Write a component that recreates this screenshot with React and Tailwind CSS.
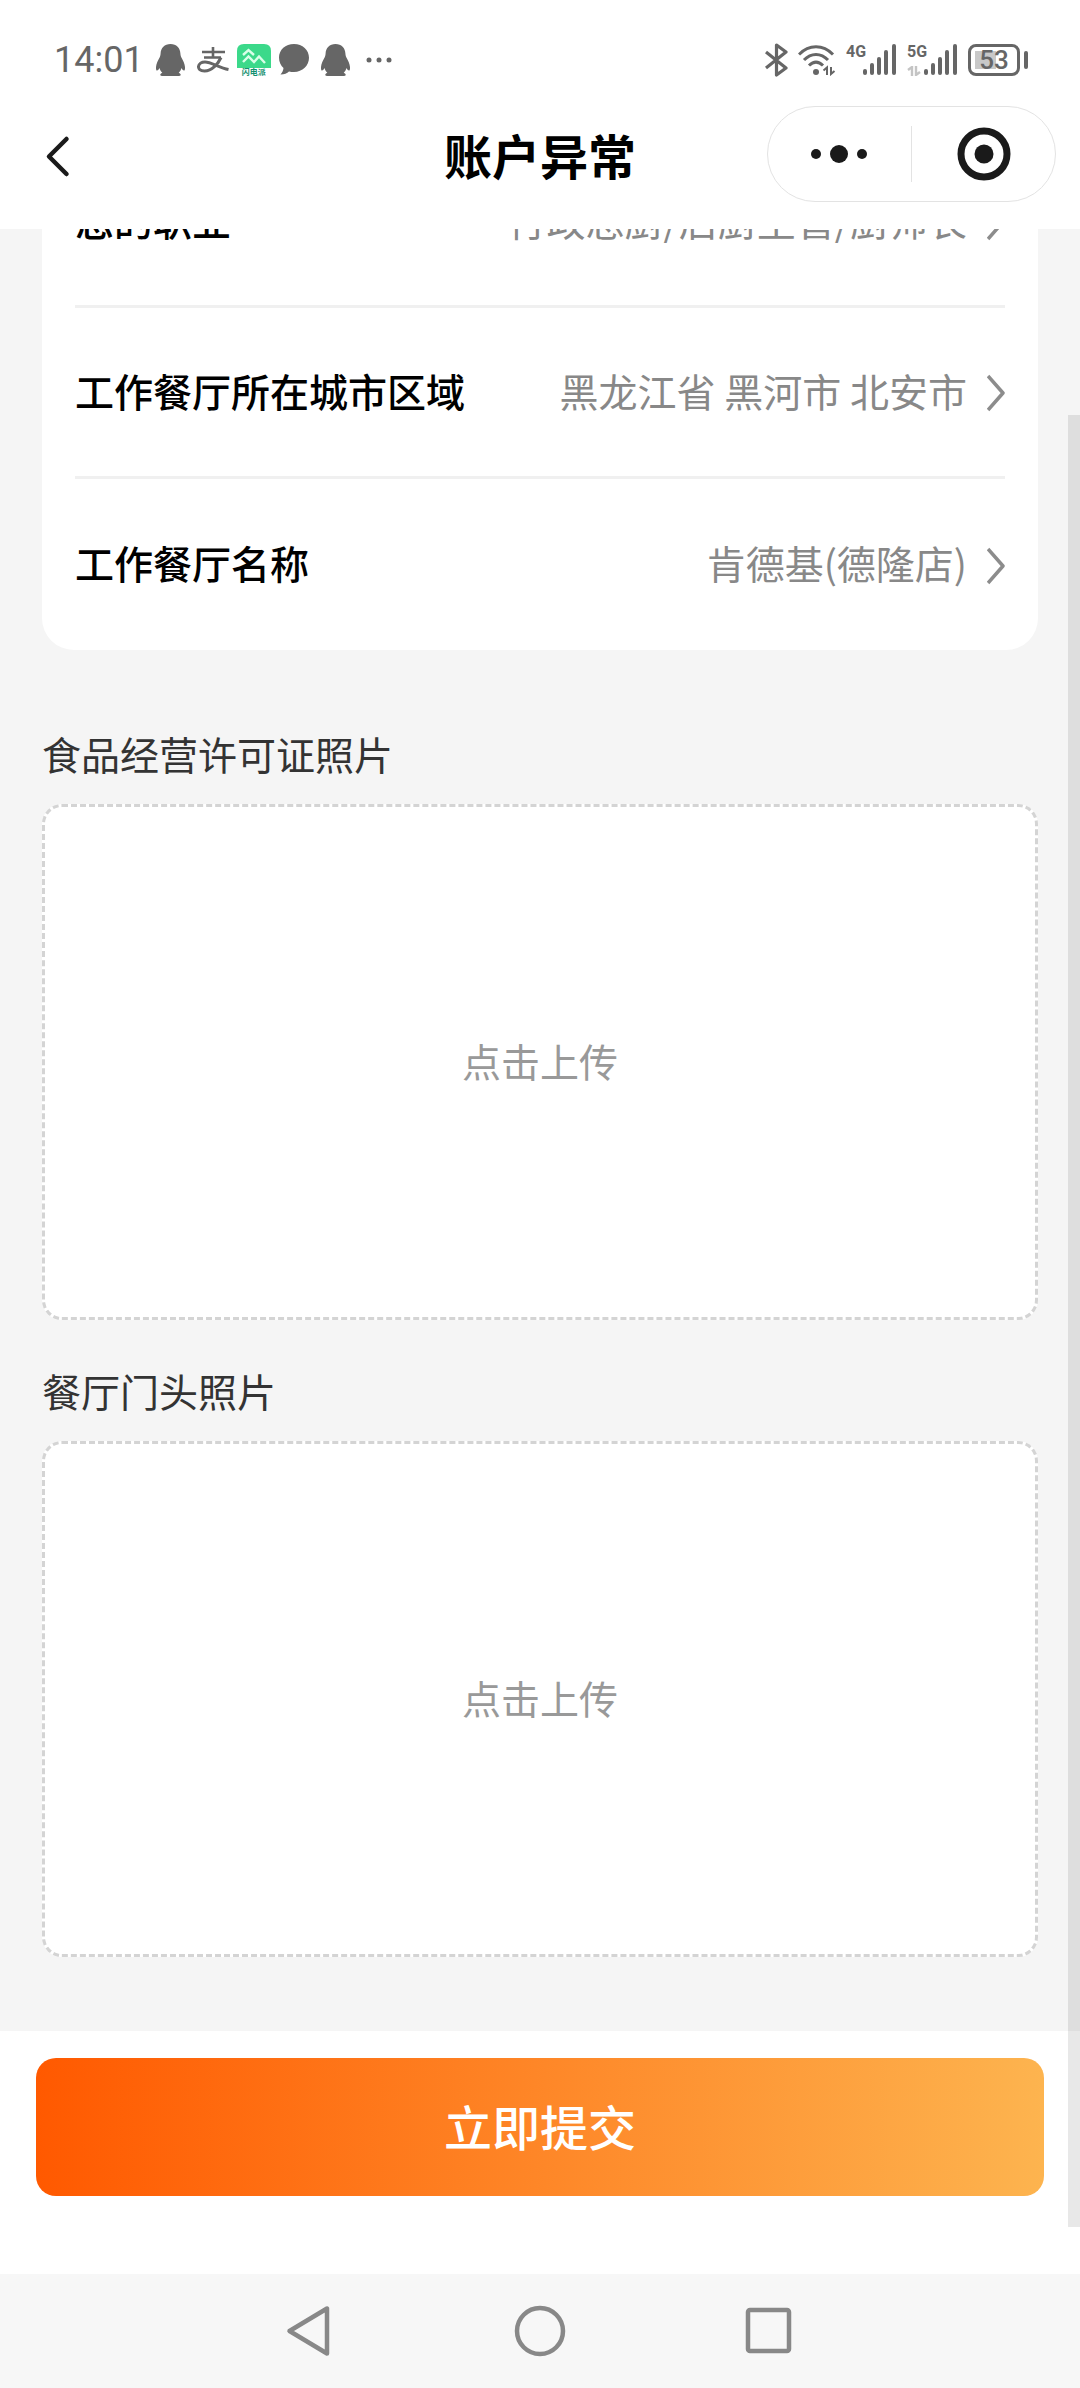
import React, { useState } from "react";

const PROFILE_ROWS = [
  { label: "您的职业", value: "行政总厨/后厨主管/厨师长" },
  { label: "工作餐厅所在城市区域", value: "黑龙江省 黑河市 北安市" },
  { label: "工作餐厅名称", value: "肯德基(德隆店)" },
];

const UPLOADS = [
  { id: "license", title: "食品经营许可证照片" },
  { id: "storefront", title: "餐厅门头照片" },
];

const PenguinIcon = () => (
  <svg width="29" height="32" viewBox="0 0 29 32" fill="#666">
    <path d="M14.500 0C8.500 0 4.800 4 4.600 9.500C4.500 11 4.300 12 3.600 13.500C2 16.500 .3 19.500 0 23C-.1 25 .2 26.600 1 26.500C2 26.400 2.800 25.200 3.600 24C4 26 5 27.600 6.300 28.700C4.800 29.200 4.200 30 4.300 31C4.400 31.800 5.500 32 7 32H22C23.500 32 24.600 31.800 24.700 31C24.800 30 24.200 29.200 22.700 28.700C24 27.600 25 26 25.400 24C26.200 25.200 27 26.400 28 26.500C28.800 26.600 29.100 25 29 23C28.700 19.500 27 16.500 25.400 13.500C24.700 12 24.500 11 24.400 9.500C24.200 4 20.500 0 14.500 0Z" />
  </svg>
);

const AlipayIcon = () => (
  <svg width="32" height="26" viewBox="0 0 32 26" fill="none" stroke="#666" strokeWidth="2.600">
    <path d="M5 5H28M16 0V10M7 10.500H24" />
    <path d="M24 10.500C21 17 15 24 7.500 24C3 24 1.300 21.800 1.500 19.500C1.800 16.800 4.500 15 8 15C14 15 22 20.500 31.500 22.500" strokeWidth="3" />
  </svg>
);

const AppBadge = () => (
  <span className="flex h-8 w-[34px] flex-col items-center rounded-lg bg-white">
    <svg className="shrink-0" width="34" height="24" viewBox="0 0 34 24">
      <path d="M7 0H27Q34 0 34 7V24H0V7Q0 0 7 0Z" fill="#3bd98a" />
      <path d="M6 11L11.500 6L17 11M6 18L11.500 12.500L17 18L22 12.500L28 19" fill="none" stroke="#d9ffe9" strokeWidth="2.400" />
    </svg>
    <span className="text-[8px] font-bold leading-[8px] text-[#13906f]">闪电派</span>
  </span>
);

const BubbleIcon = () => (
  <svg width="30" height="31" viewBox="0 0 30 31" fill="#666">
    <path d="M15 0C6.500 0 0 5.800 0 13.500C0 18 1.800 21.500 4.500 24C4.300 26.500 3.200 28.500 1.500 30.500C5 30.600 8 29.400 10 27.500C11.600 27.900 13.300 28 15 28C23.500 28 30 21.500 30 13.800C30 5.800 23.500 0 15 0Z" />
  </svg>
);

const BluetoothIcon = () => (
  <svg width="23" height="34" viewBox="0 0 23 34" fill="none" stroke="#666" strokeWidth="3.200" strokeLinejoin="round">
    <path d="M1 9L21 25L11.500 32V2L21 9L1 25" />
  </svg>
);

const WifiIcon = () => (
  <svg width="38" height="32" viewBox="0 0 38 32" fill="none" stroke="#666" strokeWidth="3">
    <path d="M1 10.500C11 .2 25 .2 35 10.500M6 16C13 8.500 23 8.500 30 16M11 21.500C15.500 17 20.500 17 25 21.500" />
    <circle cx="18" cy="28" r="3" fill="#666" stroke="none" />
    <path d="M25.500 26.500L29 23.500V31M36.500 27L33 30V23" strokeWidth="2" />
  </svg>
);

const SignalBars = () => (
  <svg width="34" height="32" viewBox="0 0 34 32" fill="#666">
    <rect x="0" y="25" width="4" height="6" rx="2" />
    <rect x="7" y="19" width="4" height="12" rx="2" />
    <rect x="14" y="13" width="4" height="18" rx="2" />
    <rect x="21" y="6" width="4" height="25" rx="2" />
    <rect x="29" y="0" width="4" height="31" rx="2" />
  </svg>
);

const DataArrows = () => (
  <svg width="14" height="10" viewBox="0 0 14 10" fill="none" stroke="#c4c4c4" strokeWidth="2.400">
    <path d="M1 4L5 1V10M13 6L9 9V0" />
  </svg>
);

const Signal = ({ network, faded }) => (
  <span className="flex h-8">
    <span className="flex w-[17px] flex-col gap-1.5 font-[Roboto,sans-serif] text-base font-bold leading-4">
      {network}
      {faded && <DataArrows />}
    </span>
    <SignalBars />
  </span>
);

const Battery = ({ level }) => (
  <span className="flex items-center gap-1">
    <span className="flex h-8 w-[52px] rounded-lg border-3 border-[#666] p-1">
      <span className="flex flex-1 items-center justify-center bg-linear-to-r from-[#c8c8c8] from-55% to-white to-55% font-[Roboto,sans-serif] text-[26px] font-medium leading-6">
        {level}
      </span>
    </span>
    <span className="h-[18px] w-1 rounded-xs bg-[#666]" />
  </span>
);

const StatusBar = () => (
  <div className="flex h-[79px] items-center justify-between pl-[54px] pr-[52px] pt-10 text-[#666]">
    <div className="flex items-center gap-3">
      <span className="font-[Roboto,sans-serif] text-4xl leading-9">14:01</span>
      <PenguinIcon />
      <div className="flex items-center gap-2">
        <AlipayIcon />
        <AppBadge />
        <BubbleIcon />
      </div>
      <PenguinIcon />
      <svg className="ml-1" width="26" height="6" viewBox="0 0 26 6" fill="#666">
        <circle cx="3" cy="3" r="2.500" />
        <circle cx="13" cy="3" r="2.500" />
        <circle cx="23" cy="3" r="2.500" />
      </svg>
    </div>
    <div className="flex items-center gap-2.5">
      <BluetoothIcon />
      <WifiIcon />
      <Signal network="4G" />
      <Signal network="5G" faded />
      <Battery level="53" />
    </div>
  </div>
);

const TitleBar = () => (
  <header className="grid h-[150px] grid-cols-[1fr_auto_1fr] items-center px-6">
    <button type="button" aria-label="返回" className="justify-self-start pl-5">
      <svg width="28" height="48" viewBox="0 0 28 48" fill="none" stroke="#1a1a1a" strokeWidth="4.500" strokeLinecap="round" strokeLinejoin="round">
        <path d="M22.500 9L5 26.500L22.500 44" />
      </svg>
    </button>
    <h1 className="text-5xl font-bold text-black">账户异常</h1>
    <div className="flex h-24 w-[289px] items-center justify-self-end rounded-full border border-[#e3e3e3]">
      <button type="button" aria-label="更多" className="flex flex-1 justify-center">
        <svg width="58" height="20" viewBox="0 0 58 20" fill="#1a1a1a">
          <circle cx="5" cy="10" r="5" />
          <circle cx="28" cy="10" r="9" />
          <circle cx="51" cy="10" r="5" />
        </svg>
      </button>
      <span className="h-14 w-px bg-[#e3e3e3]" />
      <button type="button" aria-label="关闭" className="flex flex-1 justify-center">
        <svg width="54" height="54" viewBox="0 0 54 54">
          <circle cx="27" cy="27" r="23" fill="none" stroke="#1a1a1a" strokeWidth="7" />
          <circle cx="27" cy="27" r="9.500" fill="#1a1a1a" />
        </svg>
      </button>
    </div>
  </header>
);

const ProfileRow = ({ label, value }) => (
  <button
    type="button"
    className="flex h-[171px] w-full items-center justify-between border-b-3 border-[#f0f0f0] pb-1 text-[39px] last:border-b-0"
  >
    <span className="font-medium text-black">{label}</span>
    <span className="flex items-center gap-5 text-[#888]">
      {value}
      <svg width="18" height="44" viewBox="0 0 18 44" fill="none" stroke="#8c8c8c" strokeWidth="3.500">
        <path d="M1 8L16 25L1 42" strokeLinejoin="round" />
      </svg>
    </span>
  </button>
);

const UploadBox = ({ id, title }) => {
  const [fileName, setFileName] = useState("");

  return (
    <section className="flex flex-col gap-[26px]">
      <h2 className="text-[39px] leading-[50px] text-[#333]">{title}</h2>
      <label
        htmlFor={id}
        className="flex h-[516px] cursor-pointer items-center justify-center rounded-[20px] border-3 border-dashed border-[#d4d4d4] bg-white pb-1 text-[39px] text-[#999]"
      >
        {fileName || "点击上传"}
        <input
          id={id}
          type="file"
          accept="image/*"
          className="hidden"
          onChange={(e) => setFileName(e.target.files[0] ? e.target.files[0].name : "")}
        />
      </label>
    </section>
  );
};

const SystemNav = () => (
  <nav className="flex h-[114px] items-center justify-center gap-[178px] bg-[#f7f7f7]">
    <button type="button" aria-label="后退">
      <svg width="50" height="52" viewBox="0 0 50 52" fill="none" stroke="#888" strokeWidth="4.500" strokeLinejoin="round">
        <path d="M41 3.500V48.500L3.500 26Z" />
      </svg>
    </button>
    <button type="button" aria-label="主页">
      <svg width="52" height="52" viewBox="0 0 52 52" fill="none" stroke="#888" strokeWidth="4.500">
        <circle cx="26" cy="26" r="23" />
      </svg>
    </button>
    <button type="button" aria-label="最近任务">
      <svg width="50" height="52" viewBox="0 0 50 52" fill="none" stroke="#888" strokeWidth="4.500">
        <rect x="4" y="5" width="41" height="41" rx="2" />
      </svg>
    </button>
  </nav>
);

export default function App() {
  return (
    <div className="flex min-h-screen flex-col bg-white font-['Noto_Sans_CJK_SC',sans-serif]">
      <StatusBar />
      <TitleBar />

      <div className="relative flex flex-1 flex-col">
        <main className="flex-1 overflow-hidden bg-[#f5f5f5] px-[42px] pb-[74px]">
          {/* the card is scrolled partly under the title bar */}
          <div className="-mt-[92px] rounded-[32px] bg-white px-[33px]">
            {PROFILE_ROWS.map((row) => (
              <ProfileRow key={row.label} {...row} />
            ))}
          </div>

          <div className="mt-[78px] flex flex-col gap-[45px]">
            {UPLOADS.map((item) => (
              <UploadBox key={item.id} {...item} />
            ))}
          </div>
        </main>

        <footer className="bg-white px-9 pb-[78px] pt-[27px]">
          <button
            type="button"
            className="h-[138px] w-full rounded-[20px] bg-linear-to-r/srgb from-[#ff5900] to-[#fdb44f] pb-1 text-5xl font-medium text-white"
          >
            立即提交
          </button>
        </footer>

        {/* scroll thumb */}
        <div className="absolute bottom-[47px] right-0 top-[186px] w-3 bg-black/9" />
      </div>

      <SystemNav />
    </div>
  );
}
